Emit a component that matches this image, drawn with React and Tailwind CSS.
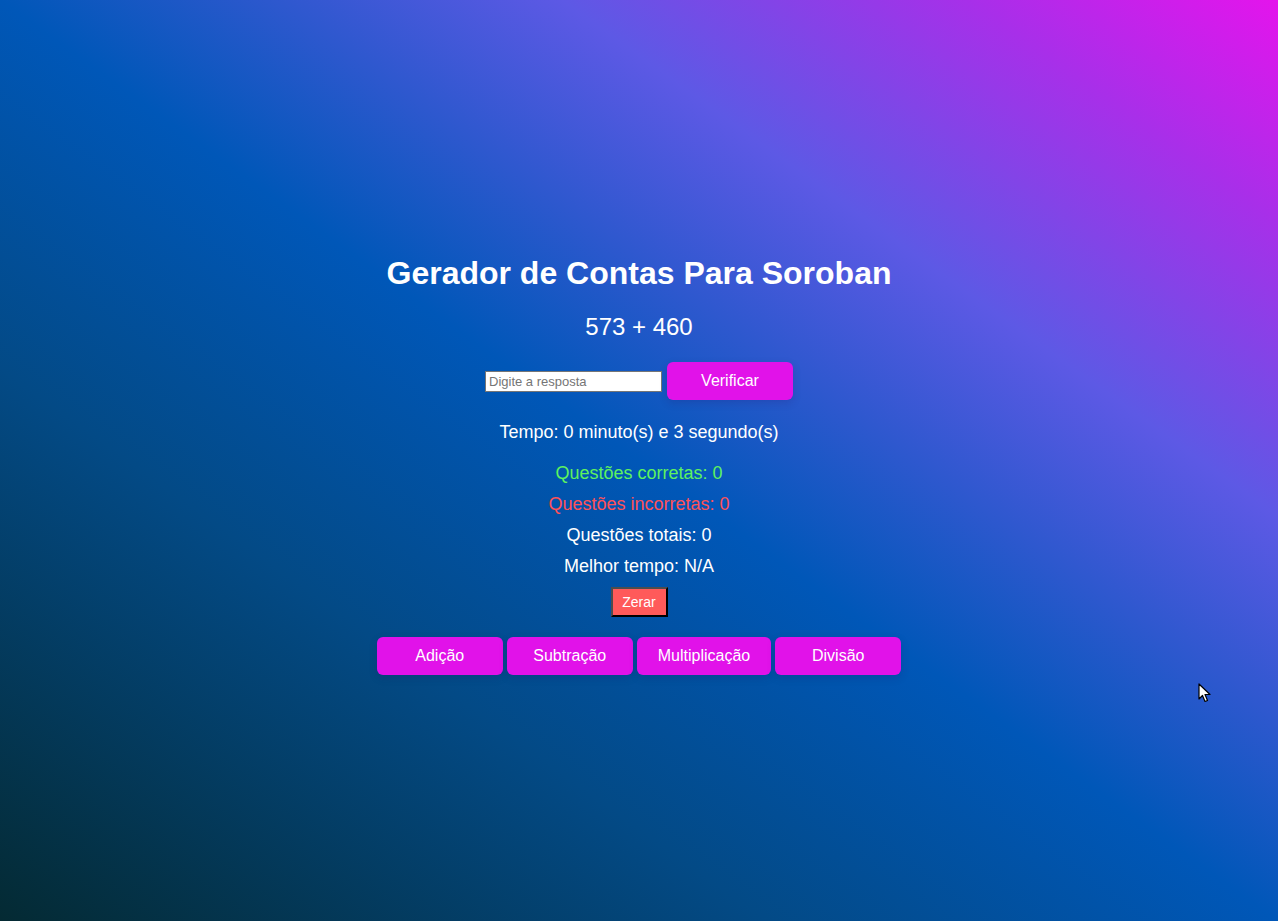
import { useState } from 'react';

const ops = ['Adição', 'Subtração', 'Multiplicação', 'Divisão'];

function PinkButton({ children }) {
  return (
    <button className="h-[38px] min-w-[126px] px-[21px] rounded-[6px] bg-[#e112e9] text-white text-[16px] shadow-[0_3px_8px_rgba(40,0,80,0.15)]">
      {children}
    </button>
  );
}

export default function App() {
  const [answer, setAnswer] = useState('');

  return (
    <div
      className="relative min-h-screen w-full overflow-hidden flex flex-col items-center pt-[255px] text-white bg-[linear-gradient(to_right_top,#042a33_0%,#034a86_30%,#0057b8_50%,#5d59e5_72%,#a82fe9_88%,#e414ec_100%)]"
      style={{ fontFamily: '"Liberation Sans", Arial, sans-serif' }}
    >
      <h1 className="text-[32px] leading-[37px] font-bold">Gerador de Contas Para Soroban</h1>
      <p className="mt-[21px] text-[24px] leading-[28px]">573 + 460</p>

      <div className="mt-[21px] flex items-center gap-[5px]">
        <input
          value={answer}
          onChange={(e) => setAnswer(e.target.value)}
          placeholder="Digite a resposta"
          className="w-[177px] h-[21px] px-[3px] bg-white text-black text-[13px] border border-[#767676] placeholder:text-[#757575] outline-none"
        />
        <PinkButton>Verificar</PinkButton>
      </div>

      <p className="mt-[22px] text-[18px] leading-[21px]">Tempo: 0 minuto(s) e 3 segundo(s)</p>

      <p className="mt-[20px] text-[18px] leading-[21px] text-[#5ef25e]">Questões corretas: 0</p>
      <p className="mt-[10px] text-[18px] leading-[21px] text-[#ff5157]">Questões incorretas: 0</p>
      <p className="mt-[10px] text-[18px] leading-[21px]">Questões totais: 0</p>
      <p className="mt-[10px] text-[18px] leading-[21px]">Melhor tempo: N/A</p>

      <button className="mt-[10px] w-[57px] h-[30px] bg-[#ff5a5a] text-white text-[14px] border-2 border-t-[#4d4d4d] border-l-[#4d4d4d] border-r-black border-b-black">
        Zerar
      </button>

      <div className="mt-[20px] flex gap-[4px]">
        {ops.map((op) => (
          <PinkButton key={op}>{op}</PinkButton>
        ))}
      </div>

      {/* mouse pointer caught in the screenshot */}
      <svg className="absolute left-[1198px] top-[683px]" width="14" height="20" viewBox="0 0 14 20">
        <path d="M1 1 L1 16 L4.5 12.5 L7 18.5 L9.5 17.5 L7 11.5 L12 11.5 Z" fill="white" stroke="black" strokeWidth="1.2" strokeLinejoin="round" />
      </svg>
    </div>
  );
}
